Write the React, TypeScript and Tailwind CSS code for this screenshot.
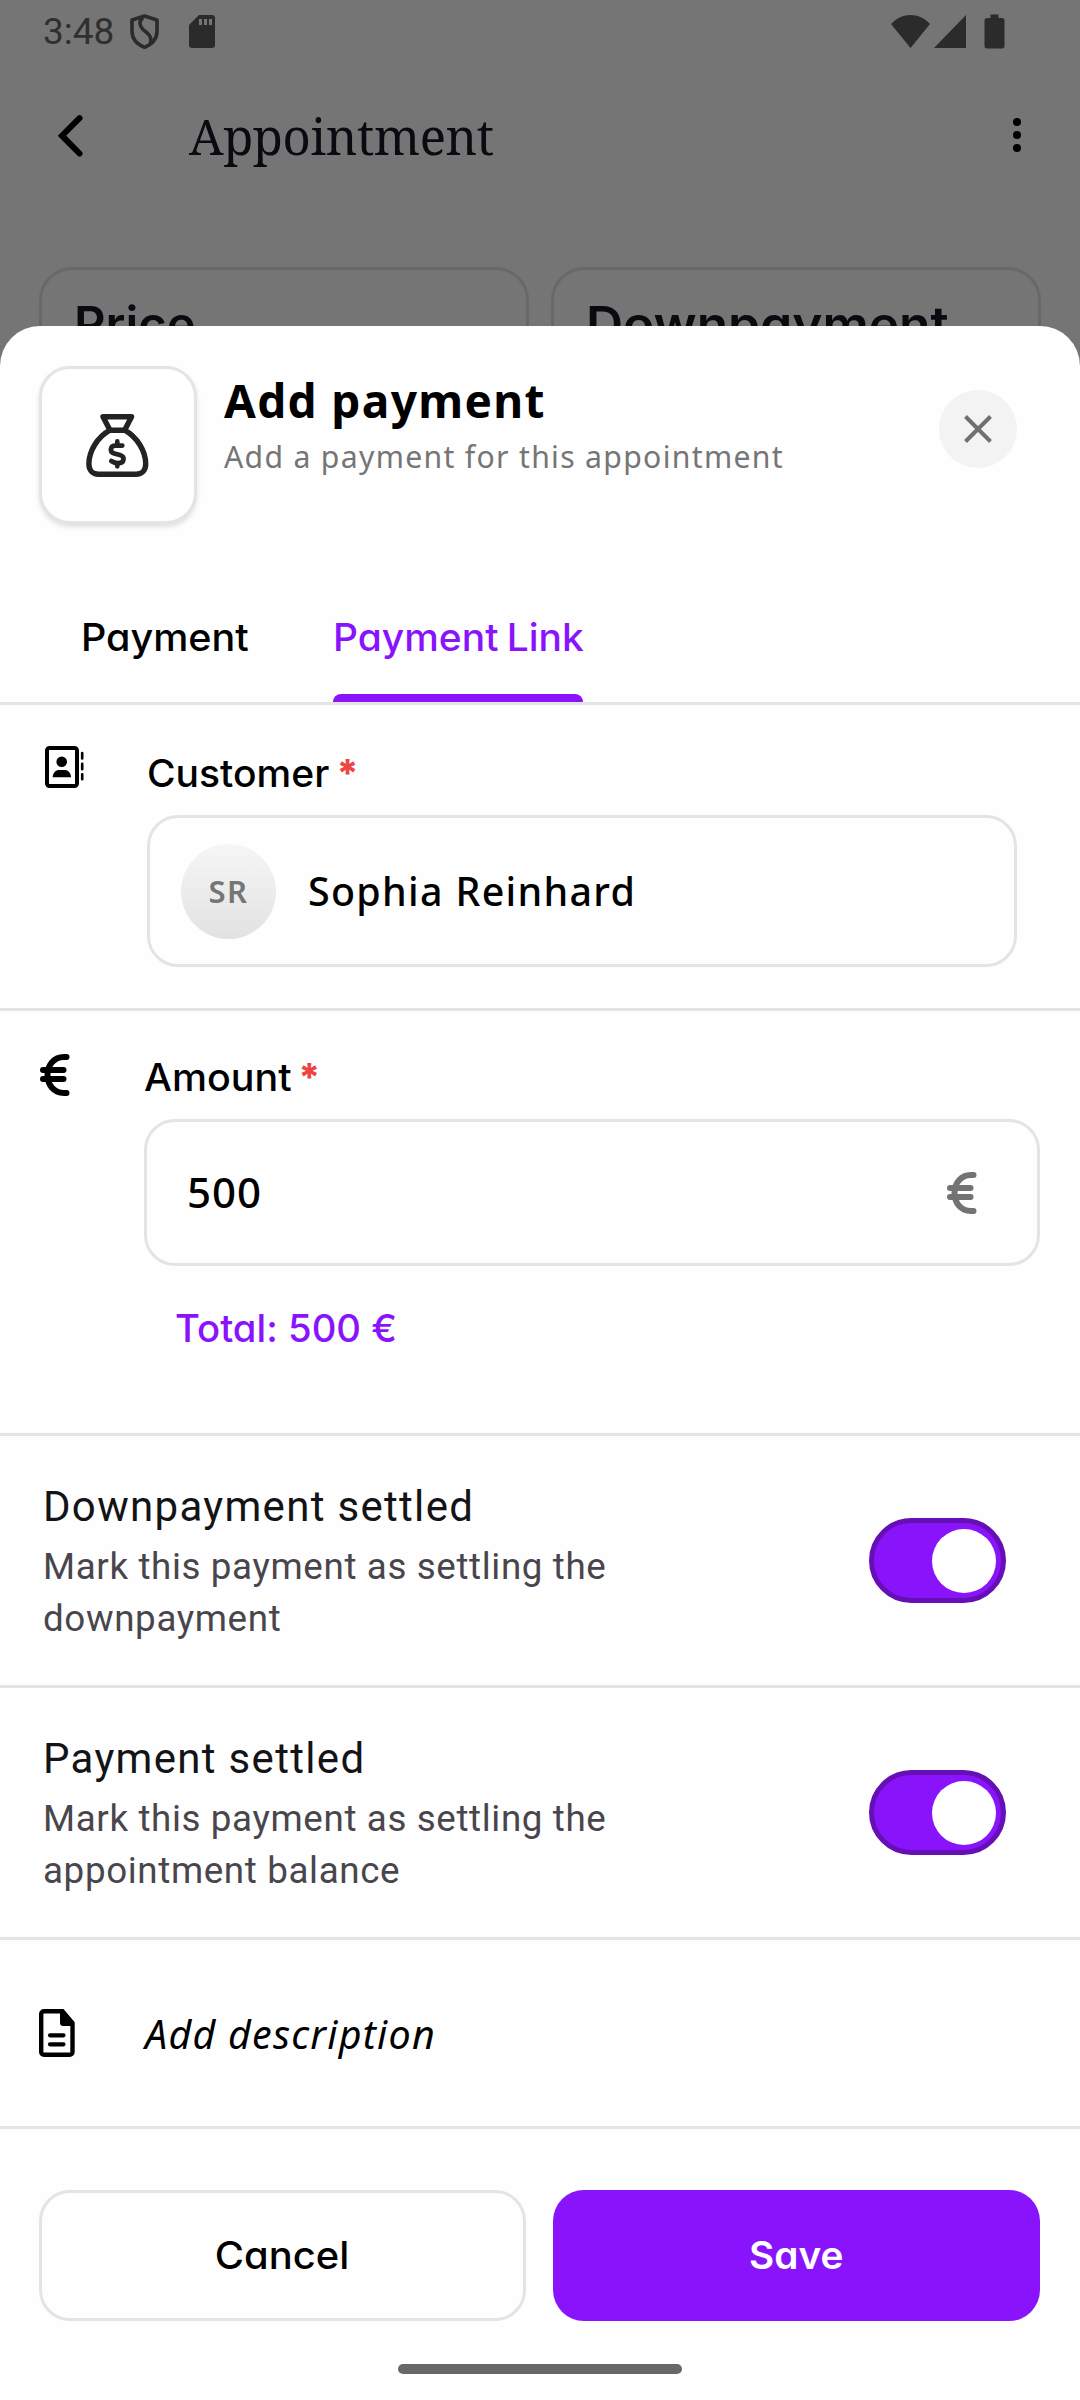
import clsx from 'clsx'
import { ReactNode, useState } from 'react'

const GEO = "[font-family:Inter,'Liberation_Sans',sans-serif] [font-feature-settings:'cv11']"
const NOTO = "[font-family:'Noto_Sans',sans-serif]"
const ROBOTO = '[font-family:Roboto,sans-serif]'
const SERIF = "[font-family:'Noto_Serif','DejaVu_Serif',serif]"

const settings = [
    {
        key: 'downpayment',
        title: 'Downpayment settled',
        lines: ['Mark this payment as settling the', 'downpayment']
    },
    {
        key: 'payment',
        title: 'Payment settled',
        lines: ['Mark this payment as settling the', 'appointment balance']
    }
]

const EuroIcon = ({ className }: { className?: string }) => (
    <svg className={clsx('h-[42px] w-[30px] shrink-0', className)} viewBox="0 0 30 42" fill="none">
        <g stroke="currentColor" strokeWidth="6" strokeLinecap="round">
            <path d="M26.5 3H24C14 3 7.5 11 7.5 21S14 39 24 39h2.5" />
            <path d="M3 16h20.5M3 25h20.5" />
        </g>
    </svg>
)

const MoneyBagIcon = () => (
    <svg className="mt-[2px] h-[64px] w-[64px]" viewBox="0 0 64 64" fill="none" stroke="#232325" strokeLinejoin="round">
        <g strokeWidth="5.4">
            <path d="M24 16.2 17 2.7h28.6l-7 13.5" />
            <path d="M24 16.2C11.5 23 2.9 37 2.9 50c0 6.2 3.6 10.3 9.6 10.3h37.6c6 0 9.6-4.1 9.6-10.3 0-13-8.7-27-21.1-33.8z" />
        </g>
        <g strokeWidth="4.7" strokeLinecap="round">
            <path d="M36.3 31.6h-6.5c-6 0-6.5 6.4-1.5 7.9l5.6 1.6c5.5 1.7 4.5 8.1-1.6 8.1-2.7 0-5-.8-7-2.2" />
            <path d="M31.3 27.4v3.2M31.3 49.5v2.8" />
        </g>
    </svg>
)

const ContactIcon = () => (
    <svg className="h-[42px] w-[39px]" viewBox="0 0 39 42">
        <rect x="2" y="2" width="30" height="38" rx="2.5" fill="none" stroke="#000" strokeWidth="4" />
        <circle cx="16.7" cy="15.8" r="5.3" />
        <path d="M7.7 31.3c0-4.6 3.3-7.3 6.3-7.3h5.7c3 0 6.3 2.7 6.3 7.3z" />
        <path d="M37.2 7v5.5M37.2 17.8v5.5M37.2 28.3v5" stroke="#000" strokeWidth="2.6" strokeLinecap="round" />
    </svg>
)

const DocumentIcon = () => (
    <svg className="h-[48px] w-[36px]" viewBox="0 0 36 48">
        <path
            d="M5 2.2h18.5L33.5 14v29c0 1.6-1.2 2.8-2.8 2.8H5c-1.6 0-2.8-1.2-2.8-2.8V5c0-1.6 1.2-2.8 2.8-2.8z"
            fill="none"
            stroke="#000"
            strokeWidth="4.4"
        />
        <path d="M21 1.5h4L35 13v4H24c-1.7 0-3-1.3-3-3z" />
        <path d="M11 26.3h13.5M11 35.3h13.5" stroke="#000" strokeWidth="4.2" strokeLinecap="round" />
    </svg>
)

const StatusBar = () => (
    <div className="flex h-[62px] items-center pl-[43px] pr-[75px]">
        <span className={clsx(ROBOTO, 'w-[87px] text-[37px] leading-none text-[#2f2f2f]')}>3:48</span>
        <svg className="h-[35px] w-[29px]" viewBox="0 0 29 35" fill="none" stroke="#2b2b2b" strokeWidth="3.6">
            <path d="M14.5 2 27 6v11c0 8-5.5 13.5-12.5 16.3C7.5 30.5 2 25 2 17V6z" strokeLinejoin="round" />
            <path d="M13 3.5C8.5 7 9.5 12 13 15.5c4.5 4 9.5 6.5 7.5 14" />
        </svg>
        <svg className="ml-[30px] h-[33px] w-[26px]" viewBox="0 0 26 33" fill="#2b2b2b">
            <path d="M10 0h13a3 3 0 0 1 3 3v27a3 3 0 0 1-3 3H3a3 3 0 0 1-3-3V10z" />
            <path d="M10 4h3v6h-3zM15 4h3v6h-3zM20 4h3v6h-3z" fill="#757575" />
        </svg>
        <div className="grow" />
        <svg className="h-[33px] w-[39px]" viewBox="0 0 39 33" fill="#2b2b2b">
            <path d="M0 9C11-3 28-3 39 9L19.5 33z" />
        </svg>
        <svg className="ml-[4px] h-[33px] w-[32px]" viewBox="0 0 33 33" fill="#2b2b2b" preserveAspectRatio="none">
            <path d="M33 0v33H0z" />
        </svg>
        <svg className="ml-[18px] h-[35px] w-[21px]" viewBox="0 0 21 34" fill="#2b2b2b">
            <path d="M6.5 0h8v3.5H18A2.5 2.5 0 0 1 20.5 6v25.5A2.5 2.5 0 0 1 18 34H3a2.5 2.5 0 0 1-2.5-2.5V6A2.5 2.5 0 0 1 3 3.5h3.5z" />
        </svg>
    </div>
)

const Label = ({ children, className }: { children: string; className?: string }) => (
    <p className={clsx(GEO, 'flex h-[52px] whitespace-nowrap text-[38px] font-medium leading-[52px]')}>
        <span className={clsx('origin-left', className)}>{children}</span>
        <span className="ml-[12px] font-extrabold text-[#ef4444]">*</span>
    </p>
)

const Toggle = ({ on, onChange }: { on: boolean; onChange: () => void }) => (
    <button
        className={clsx(
            'flex h-[85px] w-[137px] items-center rounded-full border-[5.5px] px-[5px]',
            on ? 'justify-end border-[#650fb5] bg-[#8914fc]' : 'justify-start border-[#a3a3a3] bg-[#d4d4d4]'
        )}
        onClick={onChange}
    >
        <span className="size-[64px] rounded-full bg-white" />
    </button>
)

const Section = ({ children, className }: { children: ReactNode; className: string }) => (
    <section className={clsx('flex border-b-[3px] border-[#e4e4e4]', className)}>{children}</section>
)

export default function App() {
    const [checked, setChecked] = useState<Record<string, boolean>>({ downpayment: true, payment: true })

    const toggle = (key: string) => () => setChecked({ ...checked, [key]: !checked[key] })

    return (
        <div className="flex h-[2400px] w-[1080px] flex-col overflow-hidden bg-[#757575] text-black">
            <div className="h-[326px] shrink-0 overflow-hidden">
                <StatusBar />
                <header className="flex h-[148px] items-center pl-[58px] pr-[59px]">
                    <svg className="h-[42px] w-[25px]" viewBox="0 0 25 42" fill="none">
                        <path d="M21.5 3.2 4 20.7l17.5 17.8" stroke="#000" strokeWidth="6" strokeLinecap="round" />
                    </svg>
                    <h1 className={clsx(SERIF, 'ml-[106px] grow text-[49px] leading-none tracking-[-0.4px] text-[#0b0a10]')}>
                        Appointment
                    </h1>
                    <div className="mb-[2px] flex flex-col gap-[5px]">
                        <span className="size-2 rounded-full bg-black" />
                        <span className="size-2 rounded-full bg-black" />
                        <span className="size-2 rounded-full bg-black" />
                    </div>
                </header>
                <div className={clsx(GEO, 'mt-[57px] flex gap-[22px] px-[39px] text-[48px] font-semibold leading-[60px] text-[#0b0a10]')}>
                    <div className="h-[200px] flex-1 rounded-[33px] border-[3px] border-[#686868] pl-[32px] pt-[24px]">
                        <span className="inline-block origin-left scale-x-[1.02]">Price</span>
                    </div>
                    <div className="h-[200px] flex-1 rounded-[33px] border-[3px] border-[#686868] pl-[32px] pt-[24px]">
                        <span className="inline-block origin-left scale-x-[1.07]">Downpayment</span>
                    </div>
                </div>
            </div>

            <main className="flex grow flex-col rounded-t-[40px] bg-[#fefefe]">
                <div className="flex h-[254px] items-start pl-[39px] pr-[63px] pt-[40px]">
                    <div className="flex size-[158px] items-center justify-center rounded-[31px] border-[3px] border-[#e4e4e4] bg-white shadow-[0_3px_5px_rgba(0,0,0,0.12)]">
                        <MoneyBagIcon />
                    </div>
                    <div className={clsx(NOTO, 'ml-[27px] mt-[4px] grow whitespace-nowrap')}>
                        <h2 className="text-[46px] font-bold leading-[60px] tracking-[1.35px]">Add payment</h2>
                        <p className="mt-[7px] text-[30.2px] leading-[40px] tracking-[1.3px] text-[#757575]">
                            Add a payment for this appointment
                        </p>
                    </div>
                    <button className="mt-[24px] flex size-[78px] items-center justify-center rounded-full bg-[#f3f3f3]">
                        <svg className="size-[28px]" viewBox="0 0 28 28" stroke="#707070" strokeWidth="4">
                            <path d="M1.5 1.5l25 25M26.5 1.5l-25 25" />
                        </svg>
                    </button>
                </div>

                <nav className={clsx(GEO, 'flex h-[125px] border-b-[3px] border-[#e4e4e4] pl-[81px] text-[38px] font-medium')}>
                    <div className="w-[252px] pt-[31px] leading-[52px]">
                        <span className="inline-block origin-left scale-x-[1.04]">Payment</span>
                    </div>
                    <div className="flex w-[250px] flex-col items-start justify-between whitespace-nowrap pt-[31px] leading-[52px] text-[#8914fc]">
                        <span className="origin-left scale-x-[1.025] [word-spacing:-2px]">Payment Link</span>
                        <span className="h-[8px] w-full rounded-t-[8px] bg-[#8914fc]" />
                    </div>
                </nav>

                <Section className="h-[306px] pt-[41px]">
                    <div className="w-[147px] shrink-0 pl-[45px]">
                        <ContactIcon />
                    </div>
                    <div className="pt-px">
                        <Label className="scale-x-[1.027]">Customer</Label>
                        <div className="mt-[16px] flex h-[152px] w-[870px] items-center rounded-[31px] border-[3px] border-[#e4e4e4] pl-[31px]">
                            <div
                                className={clsx(
                                    NOTO,
                                    'flex size-[95px] items-center justify-center rounded-full bg-linear-to-b from-[#f6f6f6] to-[#e2e2e2] text-[31px] font-semibold tracking-[1.5px] text-[#757575]'
                                )}
                            >
                                SR
                            </div>
                            <span className={clsx(NOTO, 'ml-[32px] mt-[2px] text-[39.4px] font-medium tracking-[1.31px]')}>
                                Sophia Reinhard
                            </span>
                        </div>
                    </div>
                </Section>

                <Section className="h-[425px] pt-[40px]">
                    <div className="w-[144px] shrink-0 pl-[40px] pt-[3px]">
                        <EuroIcon />
                    </div>
                    <div>
                        <Label className="scale-x-[1.037]">Amount</Label>
                        <div className="mt-[16px] flex h-[147px] w-[896px] items-center justify-between rounded-[31px] border-[3px] border-[#e4e4e4] pl-[40px] pr-[60px]">
                            <span className={clsx(NOTO, 'mb-[2px] text-[42px] font-medium tracking-[1px]')}>500</span>
                            <EuroIcon className="text-[#737373]" />
                        </div>
                        <p className={clsx(GEO, 'mt-[36px] pl-[31px] text-[38px] font-medium leading-[52px] text-[#8914fc]')}>
                            <span className="inline-block origin-left scale-x-[1.008]">Total: 500 €</span>
                        </p>
                    </div>
                </Section>

                {settings.map((item) => (
                    <Section key={item.key} className="h-[252px] items-center justify-between pl-[43px] pr-[74px]">
                        <div className={clsx(ROBOTO, 'mt-[5px] whitespace-nowrap leading-[52px]')}>
                            <p className="text-[42px] tracking-[1.31px] text-[#141316]">{item.title}</p>
                            <p className="mt-[8px] text-[36.75px] tracking-[0.63px] text-[#48464c]">
                                {item.lines[0]}
                                <br />
                                {item.lines[1]}
                            </p>
                        </div>
                        <Toggle on={checked[item.key]} onChange={toggle(item.key)} />
                    </Section>
                ))}

                <Section className="h-[189px] items-center pl-[39px]">
                    <DocumentIcon />
                    <span className={clsx(NOTO, 'ml-[70px] mt-[3px] text-[39.4px] italic tracking-[1.25px]')}>Add description</span>
                </Section>

                <footer className={clsx(GEO, 'flex flex-col items-center pt-[61px] text-[38px]')}>
                    <div className="mr-px flex gap-[27px]">
                        <button className="h-[131px] w-[487px] rounded-[31px] border-[3px] border-[#e4e4e4] font-medium">
                            <span className="inline-block scale-x-[1.05]">Cancel</span>
                        </button>
                        <button className="h-[131px] w-[487px] rounded-[31px] bg-[#8914fc] font-semibold text-white">
                            <span className="inline-block scale-x-[1.02]">Save</span>
                        </button>
                    </div>
                    <div className="mt-[43px] h-[10px] w-[284px] rounded-[5px] bg-[#686868]" />
                </footer>
            </main>
        </div>
    )
}
